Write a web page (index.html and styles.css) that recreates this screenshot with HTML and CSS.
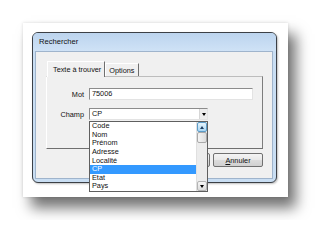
FILE: index.html
```html
<!DOCTYPE html>
<html lang="fr">
<head>
  <meta charset="UTF-8">
  <title>Rechercher</title>
  <link rel="stylesheet" href="styles.css">
</head>
<body>

  <div class="paper">
    <div class="window">
      <div class="titlebar">Rechercher</div>

      <div class="client">
        <!-- onglets -->
        <div class="tabs">
          <div class="tab active">Texte à trouver</div>
          <div class="tab">Options</div>
        </div>

        <div class="panel">
          <label class="lbl">Mot</label>
          <div class="field">75006</div>

          <label class="lbl">Champ</label>
          <div class="combo">
            <span>CP</span>
            <span class="drop"><span class="tri"></span></span>

            <!-- liste déroulante ouverte -->
            <div class="list">
              <div class="items">
                <div class="item">Code</div>
                <div class="item">Nom</div>
                <div class="item">Prénom</div>
                <div class="item">Adresse</div>
                <div class="item">Localité</div>
                <div class="item sel">CP</div>
                <div class="item">Etat</div>
                <div class="item">Pays</div>
              </div>
              <div class="vscroll">
                <div class="sbtn up"><span class="tri-up"></span></div>
                <div class="thumb"></div>
                <div class="track"></div>
                <div class="sbtn"><span class="tri"></span></div>
              </div>
            </div>
          </div>
        </div>

        <div class="buttons">
          <button class="btn">OK</button>
          <button class="btn"><u>A</u>nnuler</button>
        </div>
      </div>
    </div>
  </div>

</body>
</html>
```

FILE: styles.css
```css
body { margin:0; padding:23px; background:#fff;
       font-family:'Liberation Sans', Arial, sans-serif; color:#000; }

/* feuille blanche avec ombre portée */
.paper {
  width:265px; height:174px; box-sizing:border-box;
  padding:9px 11px 14px 9px; background:#fff;
  box-shadow:0 0 3px rgba(0,0,0,0.15), 8px 11px 13px rgba(0,0,0,0.55);
}

/* fenêtre Windows 7 basique */
.window {
  width:245px; height:151px; box-sizing:border-box;
  border:1px solid #3c4046; border-radius:6px;
  background:#c9def3; padding:0 3px 3px 2px;
  display:flex; flex-direction:column;
  box-shadow:1px 1px 2px rgba(0,0,0,0.25);
}
.titlebar {
  height:18px; line-height:18px;
  font-size:7.6px; color:#111;
  background:linear-gradient(180deg, #bcd4ee 0%, #cfe2f6 100%);
  border-radius:5px 5px 0 0; margin:0 -3px 0 -2px; padding-left:6px;
}
.client {
  flex:1; background:#f0f0f0; border:1px solid #9fb4cc;
  box-sizing:border-box; padding:9px 9px 0 10px;
  font-size:7.3px; color:#111;
}

/* onglets */
.tabs { display:flex; align-items:flex-end; height:15px; padding-left:1px; }
.tab {
  height:13px; line-height:13px; padding:0 4px 0 3px;
  border-top:1px solid #fff; border-left:1px solid #fff;
  border-right:1px solid #6f6f6f; box-sizing:border-box;
}
.tab.active { height:16px; line-height:15px; padding:0 3px 0 5px; position:relative; z-index:1;
              background:#f0f0f0; margin-bottom:-1px; }

.panel {
  width:217px; height:73px; box-sizing:border-box;
  border-top:1px solid #bdbdbd; border-left:1px solid #fff;
  border-right:1px solid #7d7d7d; border-bottom:1px solid #6f6f6f;
  padding:11px 0 0 3px;
  display:grid; grid-template-columns:34px 164px; grid-template-rows:12px 12px;
  column-gap:5px; row-gap:8px; align-items:center;
}
.lbl { text-align:right; }
.field, .combo {
  height:12px; line-height:10px; box-sizing:border-box;
  border:1px solid; border-color:#8c8c8c #e3e3e3 #e3e3e3 #8c8c8c;
  background:#fff; padding-left:2px;
}
.combo { width:119px; position:relative; display:flex; }
.combo > span:first-child { flex:1; }
.drop {
  width:8px; height:10px; box-sizing:border-box;
  background:#ededed; border-left:1px solid #d6d6d6;
  display:flex; align-items:center; justify-content:center;
}
.tri { width:0; height:0; border-left:2.5px solid transparent;
       border-right:2.5px solid transparent; border-top:3px solid #000; }
.tri-up { width:0; height:0; border-left:2px solid transparent;
          border-right:2px solid transparent; border-bottom:3px solid #1d3c60; }

/* liste ouverte */
.list {
  position:absolute; left:-1px; top:12px; z-index:5;
  width:119px; height:71px; box-sizing:border-box;
  border:1px solid #5f5f5f; background:#fff; display:flex;
}
.items { flex:1; }
.item { height:8.625px; line-height:8.6px; padding-left:2px; }
.item.sel { background:#3399ff; color:#fff; }
.vscroll { width:10px; display:flex; flex-direction:column; background:#ececec;
           border-left:1px solid #e0e0e0; }
.sbtn { height:10px; box-sizing:border-box; border:1px solid #b4b4b4; border-radius:2px;
        background:linear-gradient(180deg, #f6f6f6, #dcdcdc);
        display:flex; align-items:center; justify-content:center; }
.sbtn.up { background:linear-gradient(180deg, #e6f4fc, #a9d6f3); border-color:#5c9cc9; }
.thumb { height:11px; box-sizing:border-box; border:1px solid #a9a9a9; border-radius:2px;
         background:linear-gradient(90deg, #f4f4f4, #dddddd); }
.track { flex:1; }

/* boutons */
.buttons { display:flex; justify-content:flex-end; gap:3px; padding-top:4px; width:217px; }
.btn {
  width:50px; height:14px; padding:0; font:inherit; font-size:7.3px; color:#111;
  border:1px solid #707070; border-radius:2px;
  background:linear-gradient(180deg, #f4f4f4 0%, #e8e8e8 50%, #dcdcdc 51%, #d0d0d0 100%);
}
```
